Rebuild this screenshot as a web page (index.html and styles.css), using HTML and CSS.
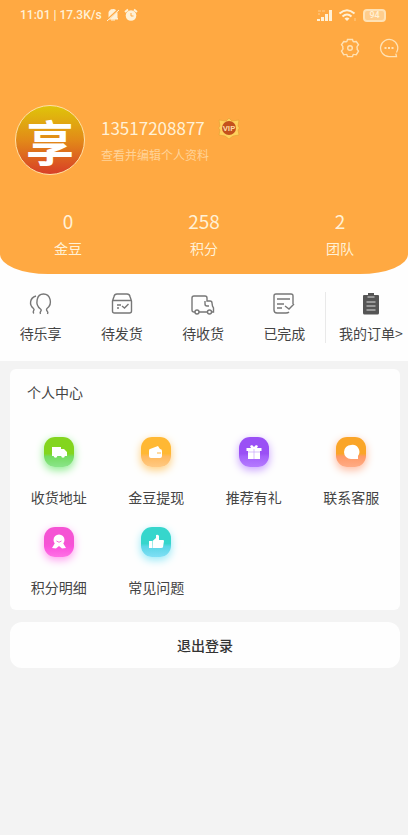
FILE: index.html
```html
<!DOCTYPE html>
<html lang="zh-CN">
<head>
<meta charset="utf-8">
<meta name="viewport" content="width=device-width, initial-scale=1">
<title>个人中心</title>
<link rel="stylesheet" href="styles.css">
</head>
<body>
<div class="top">
<header class="hero">
  <div class="status">
    <div class="status-group">
      <span>11:01 | 17.3K/s</span>
      <svg width="12" height="14" viewBox="0 0 12 14" aria-hidden="true"><path d="M2 10V6a4 4 0 0 1 8-1v5l1 1H1zM4 12h4" fill="currentColor" stroke="currentColor"/><path d="M0 12 11 2" stroke="#ffa942" stroke-width="2"/><path d="M0 13 12 2" stroke="currentColor"/></svg>
      <svg width="14" height="14" viewBox="0 0 14 14" aria-hidden="true"><circle cx="7" cy="7.500" r="5.300" fill="currentColor"/><path d="M1 4 4 1.500M13 4 10 1.500" stroke="currentColor" stroke-width="2"/><path d="M7 5v3h2.500" fill="none" stroke="#ffa942"/></svg>
    </div>
    <div class="status-group">
      <svg width="16" height="14" viewBox="0 0 16 14" aria-hidden="true"><path d="M0 11h3v2H0zM4 9h3v4H4zM8 6h3v7H8zM12 2h3v11h-3z" fill="currentColor"/><path d="M1 3h3M1 6h2M5 3h3" stroke="currentColor" opacity=".5"/></svg>
      <svg width="20" height="14" viewBox="0 0 20 14" aria-hidden="true"><path d="M1.500 5.500Q9 -1 16.500 5.500M4.500 8.500Q9 4.500 13.500 8.500" fill="none" stroke="currentColor" stroke-width="2"/><path d="M6.500 10.500Q9 8.500 11.500 10.500L9 13z" fill="currentColor"/><path d="M17 10v3" stroke="currentColor" opacity=".5"/></svg>
      <span class="battery">94</span>
    </div>
  </div>
  <div class="tools">
    <button class="tool" aria-label="设置"><svg width="20" height="20" viewBox="0 0 20 20" stroke-width="1.400"><path d="M7.500 1.500h5l.6 1.900q.3.500.9.300l2.300-.2 2.200 3.300-1.300 1.600q-.5.800 0 1.600v1.400l1.300 1.600-2.200 3.700-2.300-.3q-.6-.1-.9.300l-.6 1.900h-5l-.6-1.900q-.3-.4-.9-.3l-2.300.3-2.200-3.700 1.300-1.600q.5-.7 0-1.400V8.400L1.500 6.800l2.200-3.300 2.300.2q.6.200.9-.3z"/><circle cx="10" cy="10" r="2.300"/></svg></button>
    <button class="tool" aria-label="消息"><svg width="20" height="20" viewBox="0 0 20 20" stroke-width="1.300"><path d="M17.500 14.500A8.600 8.600 0 1 0 10 18.600h7.500l-.7-3"/><path d="M5.500 10h2M9 10h2M12.500 10h2" stroke-width="2"/></svg></button>
  </div>
  <a class="profile" href="#profile">
    <span class="avatar">享</span>
    <span class="identity">
      <span class="name">13517208877
        <svg width="22" height="22" viewBox="0 0 22 22" role="img" aria-label="VIP"><path d="m11 1 3 3 7-1-1 6 1.500 2-1.500 2 1 5-6 1-4 3-4-3-6-1 1-5-1.500-2L2 9 1 3l7 1z" fill="#ffd05c" stroke="#e2a034" stroke-width=".6"/><circle cx="11" cy="11" r="7" fill="#c4511c"/><text class="vip" x="11" y="14" text-anchor="middle">VIP</text></svg>
      </span>
      <span class="hint">查看并编辑个人资料</span>
    </span>
  </a>
  <dl class="stats">
    <div><dt>金豆</dt><dd>0</dd></div>
    <div><dt>积分</dt><dd>258</dd></div>
    <div><dt>团队</dt><dd>2</dd></div>
  </dl>
</header>
  <nav class="orders" aria-label="订单">
    <a href="#enjoy"><svg width="24" height="24" viewBox="0 0 24 24" stroke-width="1.400"><path d="M11.500 17C5.500 12.500 7.500 2 14.500 2s9.500 10 3.500 14.500c-.8.800-.5 2 .3 2.700.7.700.7 1.700.2 2.800M11.500 17c1 .8.800 1.500.2 2.200-.7.800-.7 1.800-.2 2.800M7 4C.5 6 0 13 4.500 16.500c.8.700.7 1.500.1 2.300-.6.700-.5 1.700.2 2.700"/></svg>待乐享</a>
    <a href="#ship"><svg width="24" height="24" viewBox="0 0 24 24" stroke-width="1.400"><path d="M2.500 9 4 4.500Q4.500 2 7 2h10q2.500 0 3 2.500L21.500 9v10q0 2-2 2h-15q-2 0-2-2zM3 8.500h18M7 13h4M7 16h2M12 14l2.500 2 4-4"/></svg>待发货</a>
    <a href="#receive"><svg width="24" height="24" viewBox="0 0 24 24" stroke-width="1.400"><path d="M4 20H3q-2 0-2-2V6q0-2 2-2h11q2 0 2 2v3h3q2 0 2 2l.5 3 1 2v4h-2M8 20h8M14 9v3q0 2 2 2h2"/><circle cx="6" cy="20" r="2"/><circle cx="18.500" cy="20" r="2"/></svg>待收货</a>
    <a href="#done"><svg width="24" height="24" viewBox="0 0 24 24" stroke-width="1.400"><path d="M21 12V4q0-2-2-2H4Q2 2 2 4v14q0 3 3 3h9q2 0 3-1M5 7h13M5 12h7M5 16h5M13 14l4 3 5-5"/></svg>已完成</a>
    <a class="all" href="#orders"><svg width="24" height="24" viewBox="0 0 24 24"><path d="M5 3h4V1h6v2h4q1 0 1 1v17q0 1.500-1.500 1.500h-13Q4 22.500 4 21V4q0-1 1-1z" fill="#555" stroke="none"/><path d="M7.500 10h9M7.500 14h9M7.500 18h9M8.500 5h7" stroke="#ddd"/></svg>我的订单&gt;</a>
  </nav>
</div>
<main>
  <section class="card">
    <h2>个人中心</h2>
    <div class="services">
      <a href="#address"><span class="tile green"><svg width="18" height="18" viewBox="0 0 18 18"><path d="M2 4h9v2h3l3 3v4H2z"/><circle cx="5.500" cy="13" r="1.800"/><circle cx="13" cy="13" r="1.800"/></svg></span>收货地址</a>
      <a href="#withdraw"><span class="tile amber"><svg width="18" height="18" viewBox="0 0 18 18"><path d="m3 6 8-3 2 3q2 0 2 2v5q0 2-2 2H4q-2 0-2-2V8q0-2 1-2z"/><path d="M10 10h4" stroke="#ffb642"/></svg></span>金豆提现</a>
      <a href="#invite"><span class="tile purple"><svg width="18" height="18" viewBox="0 0 18 18"><path d="M1.500 5H6L5 3l2-1 2 2 2-2 2 1-1 2h4.500v3H1.500zM3 8h12v8H3z"/><path d="M9 6v10M3 9h12" stroke="#c9a4fa" stroke-width=".7"/></svg></span>推荐有礼</a>
      <a href="#support"><span class="tile orange"><svg width="18" height="18" viewBox="0 0 18 18"><path d="M9 2a7 7 0 1 0 0 14h7v-3A7 7 0 0 0 9 2z"/></svg></span>联系客服</a>
      <a href="#points"><span class="tile pink"><svg width="18" height="18" viewBox="0 0 18 18"><circle cx="9" cy="7" r="5.500"/><path d="M5 10 2 15l4 .5 3-2.500 3 2.500 4-.5-3-5z"/><path d="M6.500 8Q9 10.500 11.500 8" fill="none" stroke="#f86bdc"/></svg></span>积分明细</a>
      <a href="#faq"><span class="tile cyan"><svg width="18" height="18" viewBox="0 0 18 18"><path d="M2 8h3v7H2zM5.500 8 9 5V2q2-1 3 1v4h4q1 0 1 1l-1 6q0 1-2 1H5.500z"/></svg></span>常见问题</a>
    </div>
  </section>
  <button class="logout">退出登录</button>
</main>
</body>
</html>
```
FILE: styles.css
```css
* {
  box-sizing: border-box;
}

body {
  margin: 0;
  background: #f3f3f3;
  color: #444;
  font: 14px/20px "Noto Sans CJK SC", sans-serif;
}

a {
  color: inherit;
  text-decoration: none;
}

button {
  border: 0;
  font: inherit;
}

.top {
  background: #fefefe;
}

.hero {
  padding-bottom: 16px;
  border-radius: 0 0 48px 48px / 0 0 20px 20px;
  background: #ffa942;
  color: #fff1d6;
}

.status {
  display: flex;
  justify-content: space-between;
  height: 30px;
  padding: 0 22px 0 20px;
  font: 500 12px/30px Roboto, sans-serif;
}

.status-group {
  display: flex;
  align-items: center;
  gap: 5px;
}

.battery {
  width: 23px;
  border: 2px solid #ffe2b5;
  border-radius: 4px;
  background: #ffcd8c;
  font-size: 9px;
  line-height: 9px;
  text-align: center;
}

.tools {
  display: flex;
  justify-content: flex-end;
  gap: 19px;
  padding: 8px 9px 0 0;
}

.tool {
  display: flex;
  padding: 0;
  background: none;
  color: #ffe2b5;
}

.tool svg {
  fill: none;
  stroke: currentColor;
}

.profile {
  display: flex;
  gap: 16px;
  margin-top: 47px;
  padding: 0 15px;
}

.avatar {
  display: flex;
  align-items: center;
  justify-content: center;
  width: 70px;
  height: 70px;
  border: 1px solid #ffe0a6;
  border-radius: 50%;
  background: linear-gradient(#dfc40a, #e28a18 50%, #d83f27);
  color: #fff;
  font-size: 48px;
  font-weight: 700;
  line-height: 66px;
}

.identity {
  display: flex;
  flex-direction: column;
  gap: 4px;
  padding-top: 10px;
}

.name {
  display: flex;
  align-items: center;
  gap: 13px;
  font-size: 17px;
  line-height: 26px;
}

.vip {
  fill: #ffd8a0;
  font: 700 8px Roboto, sans-serif;
}

.hint {
  color: #ffd398;
  font-size: 12px;
  line-height: 20px;
}

.stats {
  display: grid;
  grid-template-columns: repeat(3, 1fr);
  margin: 32px 0 0;
  text-align: center;
}

.stats div {
  display: flex;
  flex-direction: column-reverse;
  gap: 3px;
}

.stats dd {
  margin: 0;
  font-size: 19px;
  line-height: 28px;
}

.orders {
  display: grid;
  grid-template-columns: repeat(4, 1fr) 83px;
  padding: 18px 0;
}

.orders a {
  display: flex;
  flex-direction: column;
  align-items: center;
  gap: 7px;
  white-space: nowrap;
}

.orders svg {
  fill: none;
  stroke: #777;
}

.orders .all {
  padding-left: 8px;
  border-left: 1px solid #e9e9e9;
}

.card {
  margin: 8px 8px 0 10px;
  padding: 12px 0 13px;
  border-radius: 6px;
  background: #fefefe;
}

.card h2 {
  margin: 0 0 34px 17px;
  font-size: 14px;
  font-weight: 400;
  line-height: 22px;
}

.services {
  display: grid;
  grid-template-columns: repeat(4, 1fr);
  row-gap: 20px;
}

.services a {
  display: flex;
  flex-direction: column;
  align-items: center;
  gap: 20px;
}

.tile {
  display: flex;
  align-items: center;
  justify-content: center;
  width: 30px;
  height: 30px;
  border-radius: 11px;
}

.tile svg {
  fill: #fff;
}

.green {
  background: linear-gradient(#83d51e 55%, #75dc60 65%, #8ae58a);
  box-shadow: 0 3px 8px #8aec8a;
}

.amber {
  background: linear-gradient(#ffb833 55%, #ffb95e 65%, #ffc982);
  box-shadow: 0 3px 8px #ffce7a;
}

.purple {
  background: linear-gradient(#9a50f5 55%, #a461fa 65%, #b47aff);
  box-shadow: 0 3px 8px #c9a0ff;
}

.orange {
  background: linear-gradient(#faa528 55%, #ff9a66 65%, #ffab85);
  box-shadow: 0 3px 8px #ffb99c;
}

.pink {
  background: linear-gradient(#f553d4 55%, #fa52dc 65%, #ff70e5);
  box-shadow: 0 3px 8px #ff9df0;
}

.cyan {
  background: linear-gradient(#36d6cc 55%, #5bd6e6 65%, #7fdff5);
  box-shadow: 0 3px 8px #94e9f7;
}

.logout {
  display: block;
  width: calc(100% - 18px);
  margin: 12px 8px 0 10px;
  padding: 13px;
  border-radius: 12px;
  background: #fefefe;
  color: #333;
  font-weight: 500;
}
```
